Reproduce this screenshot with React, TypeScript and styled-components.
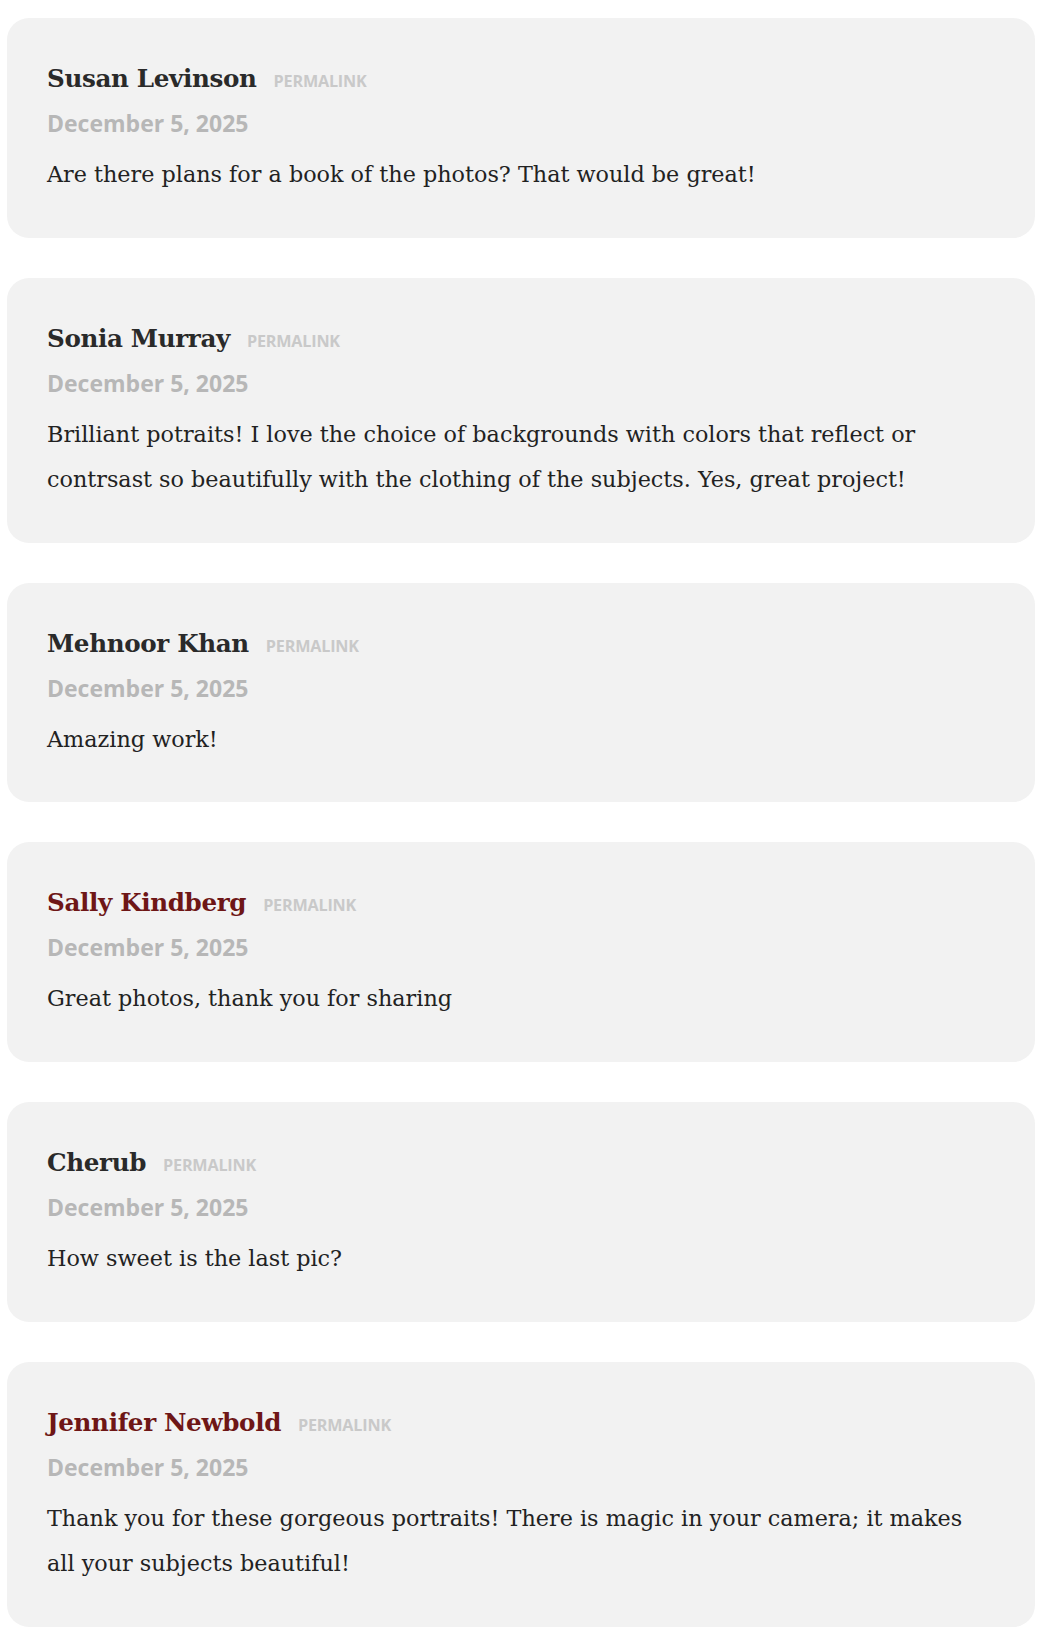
import styled, { createGlobalStyle } from "styled-components";

const GlobalStyle = createGlobalStyle`
  body {
    margin: 0;
    background: #ffffff;
  }
`;

const CommentList = styled.div`
  display: flex;
  flex-direction: column;
  gap: 40px;
  padding: 18px 7px 19px;
`;

const Card = styled.article`
  background: #f2f2f2;
  border-radius: 22px;
  padding: 41px 40px 40.8px;
`;

const Header = styled.div`
  display: flex;
  align-items: baseline;
  gap: 17px;
  line-height: 40px;
`;

const Author = styled.span<{ $linked?: boolean }>`
  font-family: "DejaVu Serif", Georgia, serif;
  font-weight: bold;
  font-size: 24.6px;
  letter-spacing: -0.35px;
  color: ${({ $linked }) => ($linked ? "#6e1616" : "#2a2a2a")};
`;

const Permalink = styled.a`
  font-family: "Open Sans", sans-serif;
  font-weight: 700;
  font-size: 16.2px;
  letter-spacing: -0.2px;
  color: #c9c9c9;
  text-decoration: none;
  text-transform: uppercase;
`;

const DateLine = styled.div`
  font-family: "Open Sans", sans-serif;
  font-weight: bold;
  font-size: 23px;
  line-height: 30px;
  margin-top: 7px;
  color: #b7b7b7;
`;

const Body = styled.p`
  margin: 14px 0 0;
  font-family: "DejaVu Serif", Georgia, serif;
  font-size: 22.3px;
  line-height: 45px;
  color: #222222;
`;

const comments = [
  {
    author: "Susan Levinson",
    text: "Are there plans for a book of the photos? That would be great!",
  },
  {
    author: "Sonia Murray",
    text: "Brilliant potraits! I love the choice of backgrounds with colors that reflect or contrsast so beautifully with the clothing of the subjects. Yes, great project!",
  },
  { author: "Mehnoor Khan", text: "Amazing work!" },
  { author: "Sally Kindberg", linked: true, text: "Great photos, thank you for sharing" },
  { author: "Cherub", text: "How sweet is the last pic?" },
  {
    author: "Jennifer Newbold",
    linked: true,
    text: "Thank you for these gorgeous portraits! There is magic in your camera; it makes all your subjects beautiful!",
  },
];

export default function App() {
  return (
    <>
      <GlobalStyle />
      <CommentList>
        {comments.map((c) => (
          <Card key={c.author}>
            <Header>
              <Author $linked={c.linked}>{c.author}</Author>
              <Permalink href="#">Permalink</Permalink>
            </Header>
            <DateLine>December 5, 2025</DateLine>
            <Body>{c.text}</Body>
          </Card>
        ))}
      </CommentList>
    </>
  );
}
